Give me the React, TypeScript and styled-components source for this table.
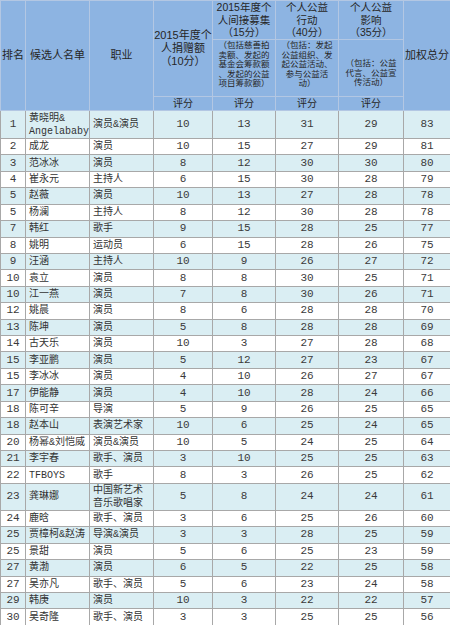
import React from 'react';
import styled, { createGlobalStyle } from 'styled-components';

const GlobalStyle = createGlobalStyle`
  html, body { margin: 0; padding: 0; background: #fff; }
  body { width: 450px; height: 625px; overflow: hidden; }
`;

const Table = styled.table`
  width: 450px;
  border-collapse: collapse;
  table-layout: fixed;
  font-family: "Liberation Sans", "Noto Sans CJK SC", sans-serif;
  color: #333;
`;

const Col = styled.col<{ $w: number }>`
  width: ${p => p.$w}px;
`;

const HeadRow = styled.tr<{ $h: number }>`
  height: ${p => p.$h}px;
`;

const HeadCell = styled.th<{ $valign?: string; $fs?: number; $lh?: number; $pt?: number }>`
  background: #8db4e2;
  border: 1px solid #b3c7e3;
  font-family: "Liberation Sans", "Noto Sans CJK SC", sans-serif;
  font-weight: normal;
  font-size: ${p => p.$fs ?? 11}px;
  line-height: ${p => p.$lh ?? 13.3}px;
  text-align: center;
  vertical-align: ${p => p.$valign ?? 'middle'};
  padding: ${p => p.$pt ?? 0}px 0 0 0;
  white-space: nowrap;
  color: #262626;
  overflow: visible;
`;

const BodyRow = styled.tr<{ $alt: boolean; $h: number }>`
  height: ${p => p.$h}px;
  background: ${p => (p.$alt ? '#daeef3' : '#ffffff')};
`;

const NumCell = styled.td`
  border: 1px solid #a8a8a8;
  text-align: center;
  vertical-align: middle;
  font-family: "Liberation Mono", monospace;
  font-size: 11px;
  line-height: 13px;
  padding: 0;
  color: #3a3a3a;
`;

const TextCell = styled.td`
  border: 1px solid #a8a8a8;
  text-align: left;
  vertical-align: middle;
  padding: 0 0 0 3px;
  font-family: "Liberation Mono", "Noto Sans CJK SC", monospace;
  font-size: 10px;
  line-height: 13px;
  white-space: nowrap;
  overflow: hidden;
  color: #333;
`;

type Row = [string, string, string, number, number, number, number, number];

const rows: Row[] = [
  ['1', '黄晓明&\nAngelababy', '演员&演员', 10, 13, 31, 29, 83],
  ['2', '成龙', '演员', 10, 15, 27, 29, 81],
  ['3', '范冰冰', '演员', 8, 12, 30, 30, 80],
  ['4', '崔永元', '主持人', 6, 15, 30, 28, 79],
  ['5', '赵薇', '演员', 10, 13, 27, 28, 78],
  ['5', '杨澜', '主持人', 8, 12, 30, 28, 78],
  ['7', '韩红', '歌手', 9, 15, 28, 25, 77],
  ['8', '姚明', '运动员', 6, 15, 28, 26, 75],
  ['9', '汪涵', '主持人', 10, 9, 26, 27, 72],
  ['10', '袁立', '演员', 8, 8, 30, 25, 71],
  ['10', '江一燕', '演员', 7, 8, 30, 26, 71],
  ['12', '姚晨', '演员', 8, 6, 28, 28, 70],
  ['13', '陈坤', '演员', 5, 8, 28, 28, 69],
  ['14', '古天乐', '演员', 10, 3, 27, 28, 68],
  ['15', '李亚鹏', '演员', 5, 12, 27, 23, 67],
  ['15', '李冰冰', '演员', 4, 10, 26, 27, 67],
  ['17', '伊能静', '演员', 4, 10, 28, 24, 66],
  ['18', '陈可辛', '导演', 5, 9, 26, 25, 65],
  ['18', '赵本山', '表演艺术家', 10, 6, 25, 24, 65],
  ['20', '杨幂&刘恺威', '演员&演员', 10, 5, 24, 25, 64],
  ['21', '李宇春', '歌手、演员', 3, 10, 25, 25, 63],
  ['22', 'TFBOYS', '歌手', 8, 3, 26, 25, 62],
  ['23', '龚琳娜', '中国新艺术\n音乐歌唱家', 5, 8, 24, 24, 61],
  ['24', '鹿晗', '歌手、演员', 3, 6, 25, 26, 60],
  ['25', '贾樟柯&赵涛', '导演&演员', 3, 3, 28, 25, 59],
  ['25', '景甜', '演员', 5, 6, 25, 23, 59],
  ['27', '黄渤', '演员', 6, 5, 22, 25, 58],
  ['27', '吴亦凡', '歌手、演员', 5, 6, 23, 24, 58],
  ['29', '韩庚', '演员', 10, 3, 22, 22, 57],
  ['30', '吴奇隆', '歌手、演员', 3, 3, 25, 25, 56],
];

const Lines: React.FC<{ text: string }> = ({ text }) => (
  <>
    {text.split('\n').map((l, i, arr) => (
      <React.Fragment key={i}>
        {l}
        {i < arr.length - 1 && <br />}
      </React.Fragment>
    ))}
  </>
);

const rowHeight = (i: number) => (i === 0 ? 28 : i === 22 ? 27 : 16.43);

export default function App() {
  return (
    <>
      <GlobalStyle />
      <Table>
        <colgroup>
          <Col $w={25} />
          <Col $w={64} />
          <Col $w={64} />
          <Col $w={59} />
          <Col $w={63} />
          <Col $w={63} />
          <Col $w={65} />
          <Col $w={47} />
        </colgroup>
        <thead>
          <HeadRow $h={39}>
            <HeadCell rowSpan={3}>排名</HeadCell>
            <HeadCell rowSpan={3}>候选人名单</HeadCell>
            <HeadCell rowSpan={3}>职业</HeadCell>
            <HeadCell rowSpan={2} $lh={13.3}>
              2015年度个<br />人捐赠额<br />（10分）
            </HeadCell>
            <HeadCell $fs={10.5} $lh={12.6}>
              2015年度个<br />人间接募集<br />（15分）
            </HeadCell>
            <HeadCell $fs={10.5} $lh={12.6}>
              个人公益<br />行动<br />（40分）
            </HeadCell>
            <HeadCell $fs={10.5} $lh={12.6}>
              个人公益<br />影响<br />（35分）
            </HeadCell>
            <HeadCell rowSpan={3}>加权总分</HeadCell>
          </HeadRow>
          <HeadRow $h={57}>
            <HeadCell $fs={8.5} $lh={9.6} $valign="top" $pt={1}>
              （包括慈善拍<br />卖额、发起的<br />基金会筹款额<br />、发起的公益<br />项目筹款额）
            </HeadCell>
            <HeadCell $fs={8.5} $lh={9.6} $valign="top" $pt={1}>
              （包括：发起<br />公益组织、发<br />起公益活动、<br />参与公益活<br />动）
            </HeadCell>
            <HeadCell $fs={8.5} $lh={9.6} $valign="top" $pt={19}>
              （包括：公益<br />代言、公益宣<br />传活动）
            </HeadCell>
          </HeadRow>
          <HeadRow $h={14}>
            <HeadCell $fs={10} $lh={12}>评分</HeadCell>
            <HeadCell $fs={10} $lh={12}>评分</HeadCell>
            <HeadCell $fs={10} $lh={12}>评分</HeadCell>
            <HeadCell $fs={10} $lh={12}>评分</HeadCell>
          </HeadRow>
        </thead>
        <tbody>
          {rows.map((r, i) => (
            <BodyRow key={i} $alt={i % 2 === 0} $h={rowHeight(i)}>
              <NumCell>{r[0]}</NumCell>
              <TextCell>
                <Lines text={r[1]} />
              </TextCell>
              <TextCell>
                <Lines text={r[2]} />
              </TextCell>
              <NumCell>{r[3]}</NumCell>
              <NumCell>{r[4]}</NumCell>
              <NumCell>{r[5]}</NumCell>
              <NumCell>{r[6]}</NumCell>
              <NumCell>{r[7]}</NumCell>
            </BodyRow>
          ))}
        </tbody>
      </Table>
    </>
  );
}
